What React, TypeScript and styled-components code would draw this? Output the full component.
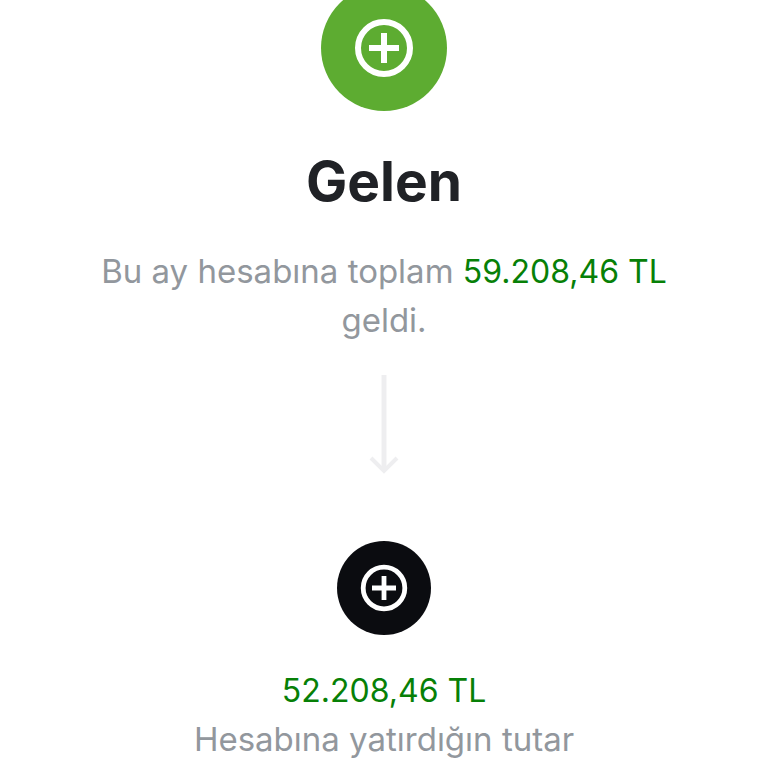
import React from "react";
import styled, { createGlobalStyle } from "styled-components";

const GlobalStyle = createGlobalStyle`
  * { box-sizing: border-box; }
  body { margin: 0; background: #fff; overflow-x: hidden; }
`;

const Page = styled.main`
  display: flex;
  flex-direction: column;
  align-items: center;
  font-family: Inter, "Open Sans", sans-serif;
  text-align: center;
`;

const Badge = styled.div<{ $size: number; $color: string }>`
  display: grid;
  place-items: center;
  width: ${(p) => p.$size}px;
  height: ${(p) => p.$size}px;
  border-radius: 50%;
  background: ${(p) => p.$color};
`;

const Summary = styled.section`
  display: flex;
  flex-direction: column;
  align-items: center;
  margin-top: -15px;
`;

const Title = styled.h1`
  margin: 34px 0 0;
  color: #202226;
  font-size: 55px;
  line-height: 72px;
  font-weight: 700;
`;

const Text = styled.p`
  margin: 0;
  color: #92979d;
  font-size: 33px;
  line-height: 48px;
  font-weight: 400;
`;

const SummaryText = styled(Text)`
  max-width: 600px;
  margin-top: 30px;
`;

const Amount = styled.span`
  color: #078007;
  font-size: 32px;
  white-space: nowrap;
`;

const ArrowIcon = styled.svg`
  margin-top: 30px;
`;

const Detail = styled.section`
  display: flex;
  flex-direction: column;
  align-items: center;
  margin-top: 66px;
`;

const DetailText = styled(Text)`
  display: flex;
  flex-direction: column;
  margin-top: 32px;
`;

function PlusIcon({ size }: { size: number }) {
  return (
    <svg width={size} height={size} viewBox="0 0 60 60" fill="none" stroke="#fff" strokeWidth="6" aria-hidden="true">
      <circle cx="30" cy="30" r="26" />
      <path d="M30 15v30M15 30h30" />
    </svg>
  );
}

export default function App() {
  return (
    <>
      <GlobalStyle />
      <Page lang="tr">
        <Summary>
          <Badge $size={126} $color="#5dac31"><PlusIcon size={60} /></Badge>
          <Title>Gelen</Title>
          <SummaryText>Bu ay hesabına toplam <Amount>59.208,46 TL</Amount> geldi.</SummaryText>
        </Summary>
        <ArrowIcon width="32" height="101" viewBox="0 0 32 101" fill="none" stroke="#eeeef0" aria-hidden="true">
          <path d="M16 1v96" strokeWidth="5" />
          <path d="M3 84l13 13 13-13" strokeWidth="4" />
        </ArrowIcon>
        <Detail>
          <Badge $size={94} $color="#0b0c10"><PlusIcon size={48} /></Badge>
          <DetailText><Amount>52.208,46 TL</Amount><span>Hesabına yatırdığın tutar</span></DetailText>
        </Detail>
      </Page>
    </>
  );
}
